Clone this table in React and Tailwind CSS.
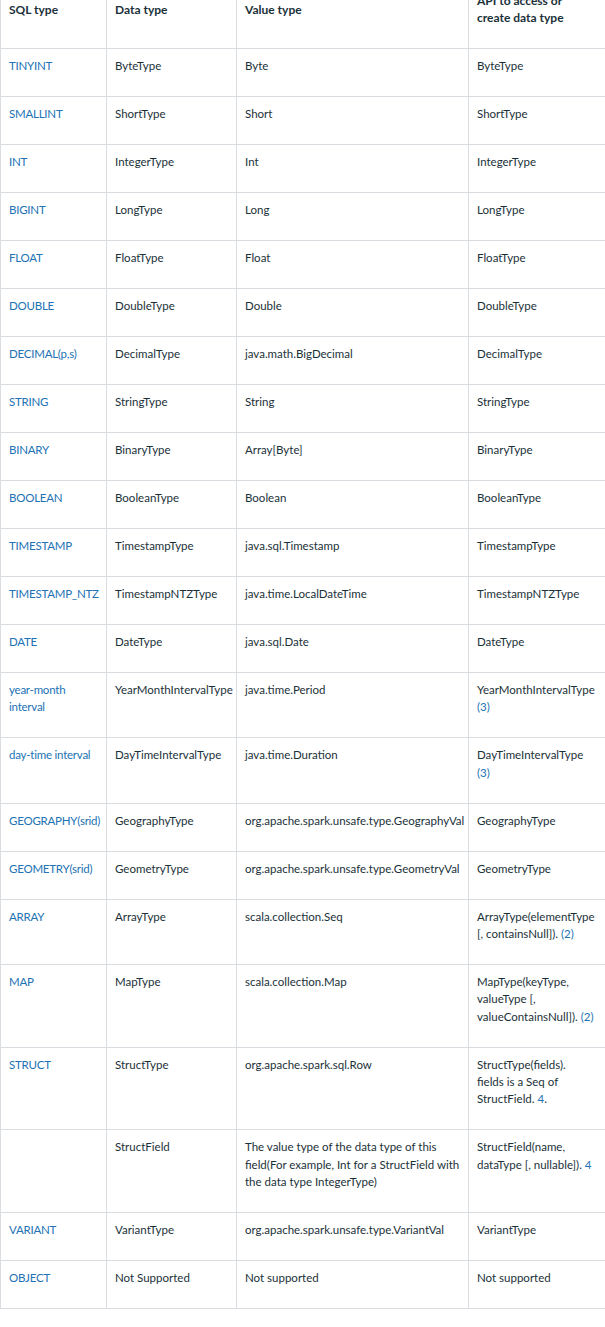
const L = ({ children }) => <span className="text-[#2272b4]">{children}</span>;

const rows = [
  ["TINYINT", "ByteType", "Byte", "ByteType"],
  ["SMALLINT", "ShortType", "Short", "ShortType"],
  ["INT", "IntegerType", "Int", "IntegerType"],
  ["BIGINT", "LongType", "Long", "LongType"],
  ["FLOAT", "FloatType", "Float", "FloatType"],
  ["DOUBLE", "DoubleType", "Double", "DoubleType"],
  ["DECIMAL(p,s)", "DecimalType", "java.math.BigDecimal", "DecimalType"],
  ["STRING", "StringType", "String", "StringType"],
  ["BINARY", "BinaryType", "Array[Byte]", "BinaryType"],
  ["BOOLEAN", "BooleanType", "Boolean", "BooleanType"],
  ["TIMESTAMP", "TimestampType", "java.sql.Timestamp", "TimestampType"],
  ["TIMESTAMP_NTZ", "TimestampNTZType", "java.time.LocalDateTime", "TimestampNTZType"],
  ["DATE", "DateType", "java.sql.Date", "DateType"],
  [
    <>year-month<br />interval</>,
    "YearMonthIntervalType",
    "java.time.Period",
    <>YearMonthIntervalType<br /><L>(3)</L></>,
  ],
  [
    "day-time interval",
    "DayTimeIntervalType",
    "java.time.Duration",
    <>DayTimeIntervalType<br /><L>(3)</L></>,
  ],
  ["GEOGRAPHY(srid)", "GeographyType", "org.apache.spark.unsafe.type.GeographyVal", "GeographyType"],
  ["GEOMETRY(srid)", "GeometryType", "org.apache.spark.unsafe.type.GeometryVal", "GeometryType"],
  [
    "ARRAY",
    "ArrayType",
    "scala.collection.Seq",
    <>ArrayType(elementType<br />[, containsNull]). <L>(2)</L></>,
  ],
  [
    "MAP",
    "MapType",
    "scala.collection.Map",
    <>MapType(keyType,<br />valueType [,<br />valueContainsNull]). <L>(2)</L></>,
  ],
  [
    "STRUCT",
    "StructType",
    "org.apache.spark.sql.Row",
    <>StructType(fields).<br />fields is a Seq of<br />StructField. <L>4</L>.</>,
  ],
  [
    "",
    "StructField",
    <>The value type of the data type of this<br />field(For example, Int for a StructField with<br />the data type IntegerType)</>,
    <>StructField(name,<br />dataType [, nullable]). <L>4</L></>,
  ],
  ["VARIANT", "VariantType", "org.apache.spark.unsafe.type.VariantVal", "VariantType"],
  ["OBJECT", "Not Supported", "Not supported", "Not supported"],
];

const cell = "border border-[#d9dde2] px-2 pt-2 pb-[21.67px] align-top whitespace-nowrap";

export default function App() {
  return (
    <div
      className="h-[1327px] w-[605px] overflow-hidden bg-white text-[11.5px] leading-[17.33px] text-[#1b3139]"
      style={{ fontFamily: "Lato, 'Noto Sans', sans-serif" }}
    >
      <div className="mt-[-17px] w-[620px]">
        <table className="w-[620px] table-fixed border-collapse">
          <colgroup>
            <col className="w-[106px]" />
            <col className="w-[130px]" />
            <col className="w-[232px]" />
            <col className="w-[152px]" />
          </colgroup>
          <thead>
            <tr>
              {["SQL type", "Data type", "Value type"].map((h) => (
                <th
                  key={h}
                  className="border border-[#d9dde2] px-2 pt-2 pb-[21.67px] text-left align-middle text-[12px] font-bold"
                >
                  {h}
                </th>
              ))}
              <th className="border border-[#d9dde2] px-2 pt-2 pb-[21.67px] text-left align-middle text-[12px] font-bold">
                API to access or
                <br />
                create data type
              </th>
            </tr>
          </thead>
          <tbody>
            {rows.map(([sql, data, value, api], i) => (
              <tr key={i}>
                <td className={cell}>
                  <span className="tracking-[-0.02em] text-[#2272b4]">{sql}</span>
                </td>
                <td className={cell}>{data}</td>
                <td className={cell}>{value}</td>
                <td className={cell}>{api}</td>
              </tr>
            ))}
          </tbody>
        </table>
        <p className="mt-[16px] pl-[3px]">Notes:</p>
      </div>
    </div>
  );
}
